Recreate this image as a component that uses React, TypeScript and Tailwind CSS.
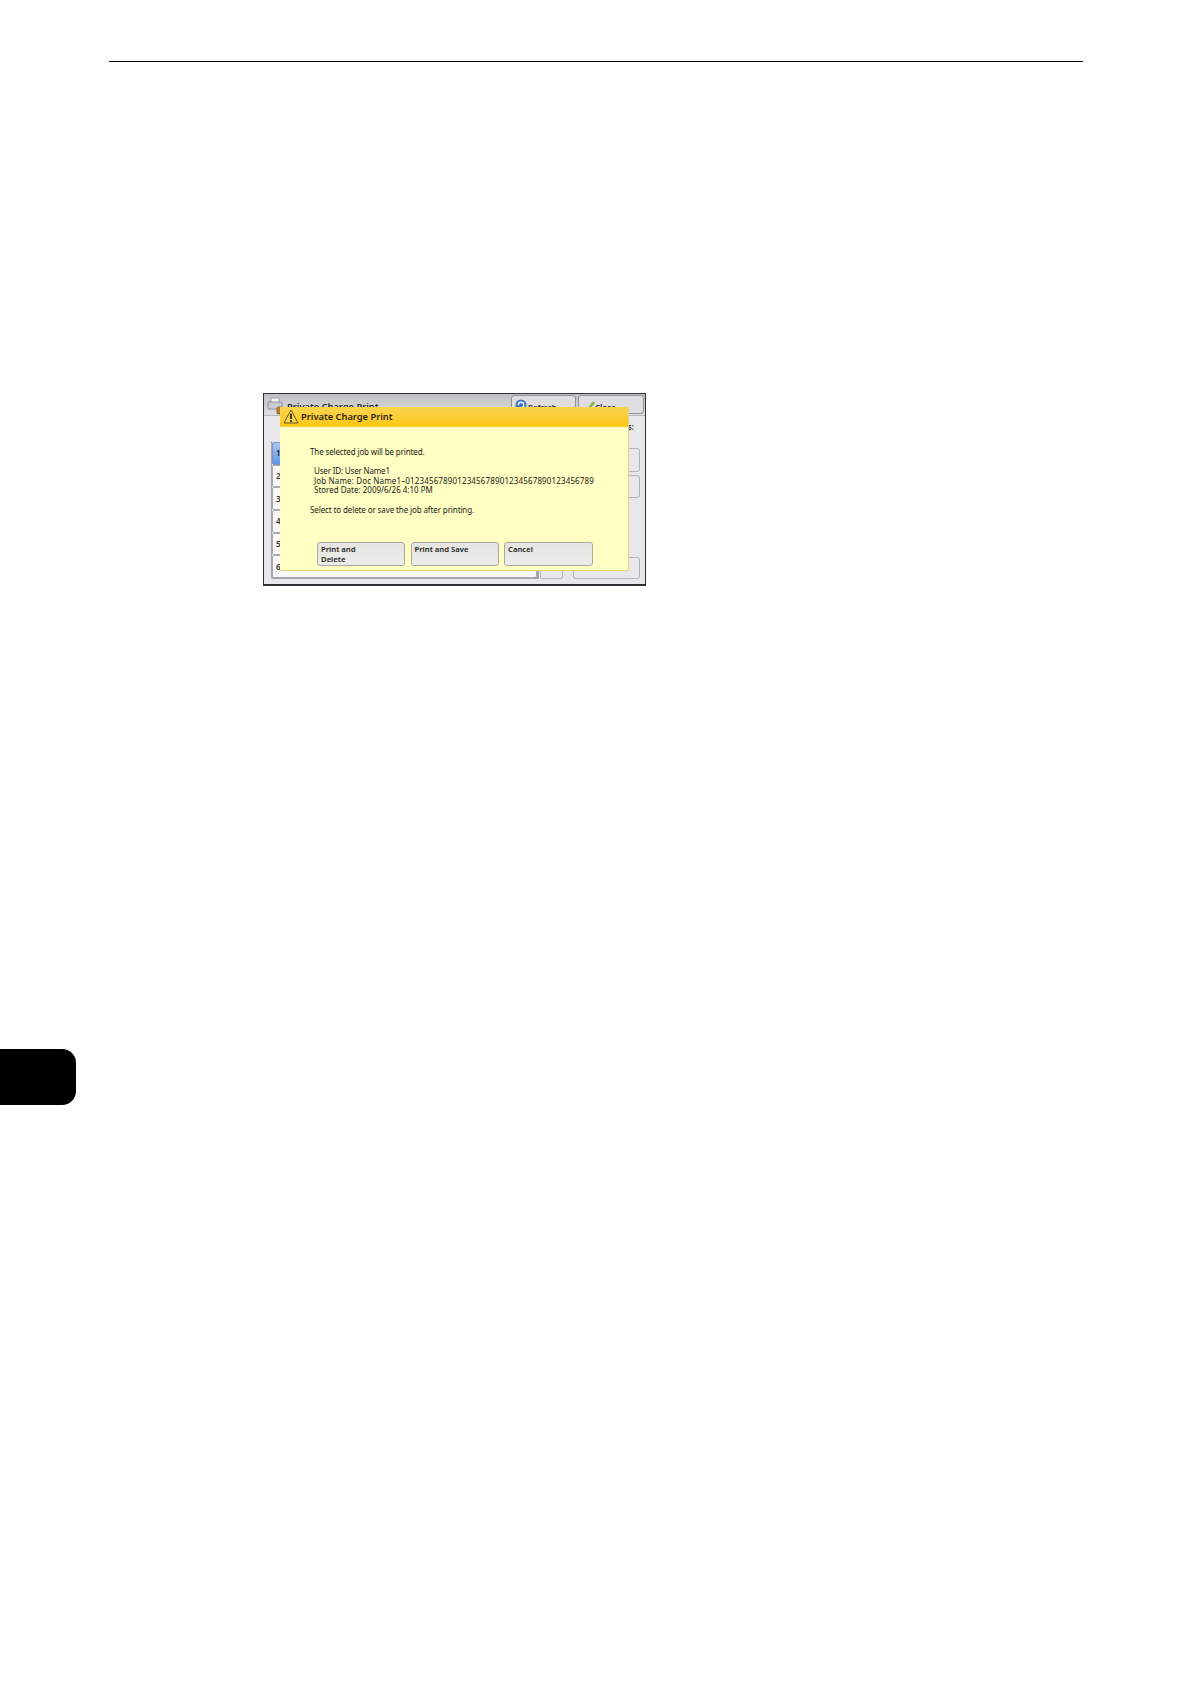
import React from "react";

const rows = ["1", "2", "3", "4", "5", "6"];

function DialogButton({ children, wide }: { children: React.ReactNode; wide?: boolean }) {
  return (
    <div className={(wide ? "w-[89px]" : "w-[88px]") + " h-[24px] rounded-[3px] border border-[#a9a9a4] bg-gradient-to-b from-[#e4e4e0] to-[#ecece8] pl-[3px] pt-[1px] leading-[10px]"}>
      {children}
    </div>
  );
}

function Dialog() {
  return (
    <div className="absolute left-[16px] top-[13px] w-[349px] h-[164px] bg-[#ffffc4] border-r border-b border-[#e8cf80] flex flex-col">
      <div className="h-[20px] shrink-0 bg-gradient-to-b from-[#fbd44e] to-[#fdc708] border-b border-[#f6cf45] flex items-center pl-[3px]">
        <svg width="16" height="15" viewBox="0 0 16 15" className="shrink-0">
          <path d="M8 1 L15 14 L1 14 Z" fill="#f7d448" stroke="#5a4a1c" strokeWidth="0.9" strokeLinejoin="round" />
          <path d="M8 4.8 V10" stroke="#1a1408" strokeWidth="1.7" />
          <circle cx="8" cy="12" r="1" fill="#1a1408" />
        </svg>
        <span className="ml-[2px] text-[9.3px] font-semibold text-[#2b2410] leading-none">Private Charge Print</span>
      </div>
      <div className="flex-1 flex flex-col pl-[30px] pt-[20px] text-[8px] leading-[9.6px] text-[#1c1c14]">
        <div className="h-[10px] tracking-[-0.13px]">The selected job will be printed.</div>
        <div className="mt-[9px] pl-[4px]">
          <div className="tracking-[-0.17px]">User ID: User Name1</div>
          <div className="tracking-[0.14px]">Job Name: Doc Name1–0123456789012345678901234567890123456789</div>
          <div>Stored Date: 2009/6/26 4:10 PM</div>
        </div>
        <div className="mt-[10px] tracking-[-0.11px]">Select to delete or save the job after printing.</div>
        <div className="flex gap-[5.5px] mt-[28px] ml-[7px] font-semibold text-[7.7px] text-[#222220]">
          <DialogButton>Print and<br />Delete</DialogButton>
          <DialogButton>Print and Save</DialogButton>
          <DialogButton wide>Cancel</DialogButton>
        </div>
      </div>
    </div>
  );
}

function Frame() {
  return (
    <div className="relative w-[383px] h-[193px] border border-[#2f3038] border-b-2 bg-[#e8e8ea] flex flex-col font-['Noto_Sans',sans-serif]">
      <div className="h-[22px] shrink-0 bg-gradient-to-b from-[#bfc0c2] to-[#dedee0] flex items-start pl-[3px] pt-[1px] border-b border-[#b6b8bc]">
        <svg width="19" height="18" viewBox="0 0 19 18" className="shrink-0 mt-[2px]">
          <rect x="4" y="1" width="8" height="5" fill="#f4f4f4" stroke="#8a8a8a" strokeWidth="0.7" />
          <rect x="1" y="5" width="14" height="7" rx="1" fill="#c9ccd0" stroke="#77797c" strokeWidth="0.7" />
          <rect x="10" y="10" width="6" height="7" rx="1.5" fill="#c9772e" stroke="#6b4a20" strokeWidth="0.7" />
        </svg>
        <span className="ml-[1px] mt-[7px] text-[9.3px] font-semibold text-[#2b2b2b] leading-none">Private Charge Print</span>
        <div className="ml-auto flex gap-[2px] mr-[1px]">
          <div className="w-[65px] h-[19px] rounded-[3px] border border-[#8e9094] bg-[#dedee0] flex items-start pl-[3px] pt-[3px]">
            <svg width="12" height="12" viewBox="0 0 13 13" className="shrink-0">
              <circle cx="6.5" cy="6.5" r="6" fill="#3b78c4" />
              <path d="M3.5 6.5 a3 3 0 1 1 3 3" stroke="#fff" strokeWidth="1.4" fill="none" />
            </svg>
            <span className="ml-[1px] mt-[3px] text-[7.7px] font-semibold text-[#2b2b2b] leading-[11px]">Refresh</span>
          </div>
          <div className="w-[66px] h-[19px] rounded-[3px] border border-[#8e9094] bg-[#dedee0] flex items-start pl-[3px] pt-[3px]">
            <svg width="13" height="13" viewBox="0 0 13 13" className="shrink-0">
              <path d="M1 9 L5 12 L12 3" stroke="#7ab648" strokeWidth="2.6" fill="none" />
            </svg>
            <span className="mt-[3px] text-[8px] font-semibold text-[#2b2b2b] leading-[11px]">Close</span>
          </div>
        </div>
      </div>
      <div className="flex pl-[7px] pt-[6px]">
        <div className="mt-[19px] w-[268px] h-[138px] pt-[1px] border-l border-b-2 border-r-2 border-[#a4a5a9] rounded-bl-[2px] flex flex-col overflow-hidden">
          {rows.map((r, i) => (
            <div
              key={r}
              className={
                i === 0
                  ? "h-[22.7px] shrink-0 bg-gradient-to-b from-[#a9c6f2] to-[#5f94e6] border border-[#7f93b8] rounded-[2px] text-[8px] font-semibold text-[#1b1b1b] flex items-center pl-[3px]"
                  : "h-[22.7px] shrink-0 bg-[#f8f8f8] border border-[#a8a9ad] rounded-[2px] text-[8px] font-semibold text-[#333] flex items-center pl-[3px]"
              }
            >
              {r}
            </div>
          ))}
        </div>
        <div className="w-[23px] h-[24px] self-end border border-[#b4b4b6] rounded-[2px] ml-[1px]" />
        <div className="ml-[10px] w-[67px] h-[157px] flex flex-col">
          <div className="h-[10px] pr-[6px] text-[8px] font-semibold leading-[10px] text-right text-[#2b2b2b]">Jobs:</div>
          <div className="h-[24px] border border-[#b4b4b6] rounded-[3px] mt-[16px]" />
          <div className="h-[23px] border border-[#b4b4b6] rounded-[3px] mt-[3px]" />
          <div className="h-[22px] border border-[#b4b4b6] rounded-[3px] mt-auto" />
        </div>
      </div>
      <Dialog />
    </div>
  );
}

export default function App() {
  return (
    <div className="w-[1190px] h-[1684px] bg-white overflow-hidden flex flex-col pt-[61px]">
      <div className="ml-[109px] w-[974px] h-[1px] bg-black shrink-0" />
      <div className="ml-[263px] mt-[331px] shrink-0">
        <Frame />
      </div>
      <div className="mt-[463px] w-[76px] h-[56px] bg-black rounded-r-[14px] shrink-0" />
    </div>
  );
}
